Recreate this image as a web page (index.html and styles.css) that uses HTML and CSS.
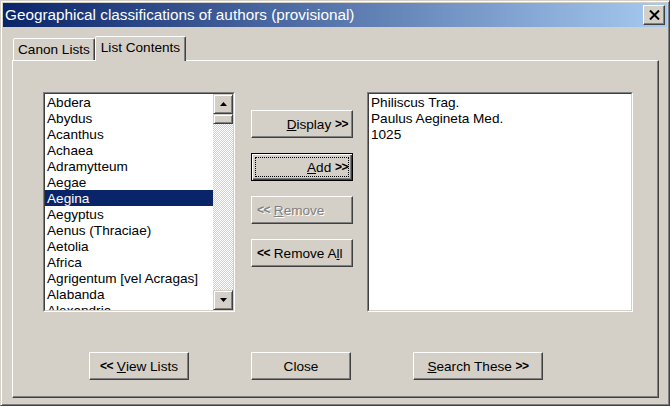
FILE: index.html
```html
<!DOCTYPE html>
<html>
<head>
  <title>Geographical classifications of authors (provisional)</title>
  <link rel="stylesheet" href="styles.css">
</head>
<body>
  <div class="window">
    <div class="titlebar">
      <span class="title-text">Geographical classifications of authors (provisional)</span>
      <button class="close-button">
        <svg width="11" height="10" viewBox="0 0 11 10"><path d="M1 0.5 L10 9.5 M10 0.5 L1 9.5" stroke="#000" stroke-width="2"/></svg>
      </button>
    </div>
    <div class="client">
      <div class="tabs">
        <div class="tab">Canon Lists</div>
        <div class="tab active">List Contents</div>
      </div>
      <div class="panel">
        <div class="lists-row">
          <div class="listbox">
            <div class="listbox-inner">
              <ul class="list-items">
                <li>Abdera</li>
                <li>Abydus</li>
                <li>Acanthus</li>
                <li>Achaea</li>
                <li>Adramytteum</li>
                <li>Aegae</li>
                <li class="selected">Aegina</li>
                <li>Aegyptus</li>
                <li>Aenus (Thraciae)</li>
                <li>Aetolia</li>
                <li>Africa</li>
                <li>Agrigentum [vel Acragas]</li>
                <li>Alabanda</li>
                <li>Alexandria</li>
              </ul>
              <div class="scrollbar">
                <div class="scroll-button">
                  <svg width="7" height="4" viewBox="0 0 7 4"><path d="M3.5 0 L7 4 L0 4 Z" fill="#000"/></svg>
                </div>
                <div class="scroll-thumb"></div>
                <div class="scroll-track"></div>
                <div class="scroll-button">
                  <svg width="7" height="4" viewBox="0 0 7 4"><path d="M0 0 L7 0 L3.5 4 Z" fill="#000"/></svg>
                </div>
              </div>
            </div>
          </div>
          <div class="move-buttons">
            <button class="btn right"><u>D</u>isplay&nbsp;<span class="arrows">&gt;&gt;</span></button>
            <button class="btn default"><span class="focus-rect"><u>A</u>dd&nbsp;<span class="arrows">&gt;&gt;</span></span></button>
            <button class="btn disabled"><span class="arrows">&lt;&lt;</span>&nbsp;<u>R</u>emove</button>
            <button class="btn"><span class="arrows">&lt;&lt;</span>&nbsp;Remove A<u>l</u>l</button>
          </div>
          <div class="textbox">
            <div class="textbox-inner">
              <p>Philiscus Trag.</p>
              <p>Paulus Aegineta Med.</p>
              <p>1025</p>
            </div>
          </div>
        </div>
        <div class="bottom-buttons">
          <button class="btn center"><span class="arrows">&lt;&lt;</span>&nbsp;<u>V</u>iew Lists</button>
          <button class="btn center">Close</button>
          <button class="btn center wide"><u>S</u>earch These&nbsp;<span class="arrows">&gt;&gt;</span></button>
        </div>
      </div>
    </div>
  </div>
</body>
</html>
```

FILE: styles.css
```css
* {
  box-sizing: border-box;
  margin: 0;
  padding: 0;
}
body {
  width: 670px;
  height: 406px;
  overflow: hidden;
  background: #d4d0c8;
  font-family: "Liberation Sans", Arial, sans-serif;
  font-size: 13.6px;
  color: #000;
}
.window {
  width: 670px;
  height: 406px;
  display: flex;
  flex-direction: column;
  padding: 2px;
  background: #d4d0c8;
  border: 1px solid;
  border-color: #d4d0c8 #404040 #404040 #d4d0c8;
  box-shadow: inset 1px 1px #fff, inset -1px -1px #808080;
}
.titlebar {
  height: 24px;
  flex-shrink: 0;
  display: flex;
  align-items: center;
  justify-content: space-between;
  padding: 0 2px;
  background: linear-gradient(to right, #0a246a, #a6caf0);
  color: #fff;
}
.title-text {
  font-size: 15.3px;
  white-space: nowrap;
}
.close-button {
  width: 22px;
  height: 20px;
  display: flex;
  align-items: center;
  justify-content: center;
  background: #d4d0c8;
  border: 1px solid;
  border-color: #fff #404040 #404040 #fff;
  box-shadow: inset -1px -1px #808080;
}
.client {
  flex: 1;
  display: flex;
  flex-direction: column;
  padding: 9px 8px 5px 9px;
}
.tabs {
  height: 24px;
  flex-shrink: 0;
  display: flex;
  align-items: flex-end;
  padding-left: 1px;
}
.tab {
  height: 22px;
  line-height: 22px;
  padding: 0 4px;
  white-space: nowrap;
  background: #d4d0c8;
  border: 1px solid;
  border-bottom: none;
  border-color: #fff #404040 transparent #fff;
  border-radius: 2px 2px 0 0;
  box-shadow: inset -1px 0 #808080;
}
.tab.active {
  position: relative;
  z-index: 1;
  height: 25px;
  line-height: 22px;
  padding: 0 5px;
  margin-bottom: -1px;
}
.panel {
  flex: 1;
  padding: 31px 0 0 30px;
  border: 1px solid;
  border-color: #fff #404040 #404040 #fff;
  box-shadow: inset -1px -1px #808080;
}
.lists-row {
  display: flex;
  align-items: flex-start;
}
.listbox,
.textbox {
  height: 220px;
  border: 1px solid;
  border-color: #808080 #fff #fff #808080;
}
.listbox {
  width: 192px;
}
.textbox {
  width: 266px;
}
.listbox-inner,
.textbox-inner {
  height: 100%;
  background: #fff;
  border: 1px solid;
  border-color: #404040 #d4d0c8 #d4d0c8 #404040;
}
.listbox-inner {
  display: flex;
}
.list-items {
  flex: 1;
  min-width: 0;
  list-style: none;
  overflow: hidden;
}
.list-items li {
  height: 16px;
  line-height: 17px;
  padding-left: 2px;
  white-space: nowrap;
}
.list-items li.selected {
  background: #0a246a;
  color: #fff;
}
.scrollbar {
  width: 20px;
  flex-shrink: 0;
  display: flex;
  flex-direction: column;
}
.scroll-button,
.scroll-thumb {
  background: #d4d0c8;
  border: 1px solid;
  border-color: #d4d0c8 #404040 #404040 #d4d0c8;
  box-shadow: inset 1px 1px #fff, inset -1px -1px #808080;
}
.scroll-button {
  height: 20px;
  flex-shrink: 0;
  display: flex;
  align-items: center;
  justify-content: center;
}
.scroll-thumb {
  height: 10px;
  flex-shrink: 0;
}
.scroll-track {
  flex: 1;
  background: repeating-conic-gradient(#fff 0 25%, #d4d0c8 0 50%) 0 0 / 2px 2px;
}
.textbox-inner {
  padding: 0 2px;
  line-height: 16px;
}
.textbox-inner p {
  height: 16px;
  line-height: 17px;
}
.move-buttons {
  width: 102px;
  display: flex;
  flex-direction: column;
  gap: 15px;
  margin: 18px 14px 0 16px;
}
.btn {
  width: 102px;
  height: 28px;
  display: flex;
  align-items: center;
  padding: 0 5px;
  font: inherit;
  color: #000;
  white-space: nowrap;
  background: #d4d0c8;
  border: 1px solid;
  border-color: #fff #404040 #404040 #fff;
  box-shadow: inset -1px -1px #808080;
}
.btn.right {
  justify-content: flex-end;
  padding-right: 4px;
}
.btn.center {
  justify-content: center;
}
.btn.default {
  padding: 3px;
  border-color: #000;
  box-shadow: inset 1px 1px #fff, inset -1px -1px #404040, inset -2px -2px #808080;
}
.focus-rect {
  flex: 1;
  height: 100%;
  display: flex;
  align-items: center;
  justify-content: flex-end;
  border: 1px dotted #000;
}
.btn.disabled {
  color: #808080;
  text-shadow: 1px 1px #fff;
}
.arrows {
  font-weight: bold;
  font-size: 12px;
  letter-spacing: -0.5px;
}
.bottom-buttons {
  display: flex;
  gap: 62px;
  margin: 40px 0 0 46px;
}
.bottom-buttons .btn {
  width: 100px;
}
.bottom-buttons .btn.wide {
  width: 130px;
}
```
